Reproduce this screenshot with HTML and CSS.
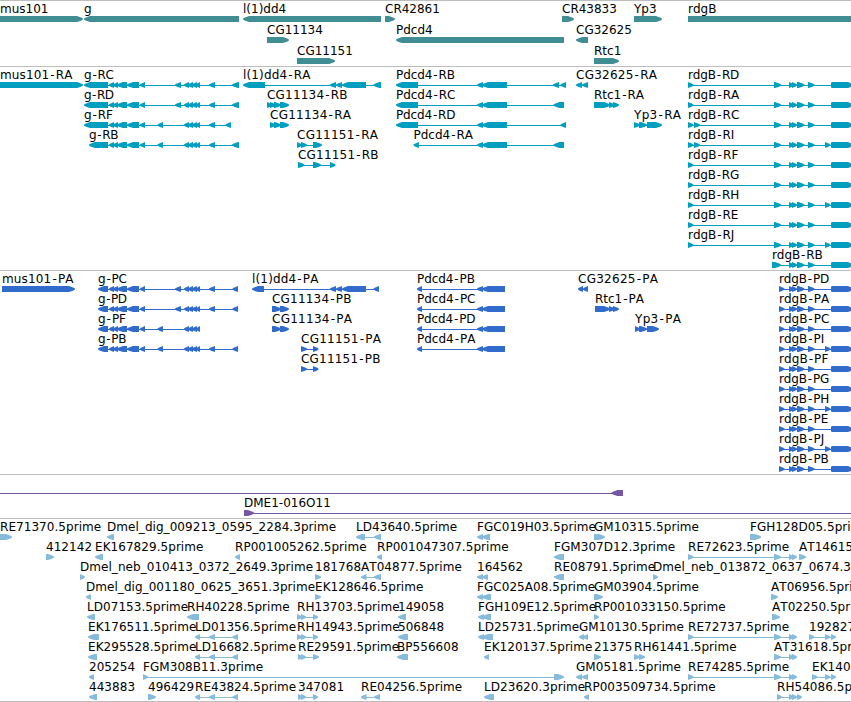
FILE: index.html
```html
<!DOCTYPE html>
<html lang="en">
<head>
<meta charset="utf-8">
<title>Genome tracks</title>
<link rel="stylesheet" href="styles.css">
</head>
<body>
<main class="browser">
<section class="track genes" data-track="genes"></section>
<section class="track transcripts" data-track="transcripts"></section>
<section class="track proteins" data-track="proteins"></section>
<section class="track bacs" data-track="bacs"></section>
<section class="track ests" data-track="ests"></section>
</main>
<script src="tracks.js"></script>
</body>
</html>
```
FILE: styles.css
```css
body {
  margin: 0;
  background: #fff;
  overflow: hidden;
}
.browser {
  display: flex;
  flex-direction: column;
  width: 851px;
  height: 702px;
  overflow: hidden;
}
.track {
  box-sizing: border-box;
  flex: none;
  border-top: 1px solid #bebebe;
  overflow: hidden;
}
.track svg {
  display: block;
  width: 851px;
  height: 100%;
}
.track text {
  font: 12px "DejaVu Sans", sans-serif;
  font-kerning: none;
  fill: #000;
  white-space: pre;
}
.genes { height: 66px; color: #408d93; }
.transcripts { height: 204px; color: #009ebf; }
.proteins { height: 204px; color: #316ccc; }
.bacs { height: 44px; color: #7657a6; }
.ests { height: 184px; color: #87bbdc; border-bottom: 1px solid #bebebe; }
.track.ests text { letter-spacing: 0.05px; }
.exon, .intron { fill: currentColor; }
.intron { shape-rendering: crispEdges; }
```
FILE: tracks.js
```js
// Feature format: "label|strand|exon exon ...|label x (optional)", exons as start-end.
const G = '117-127 127-139 140-145';
const G0 = '109-114 113-118 ' + G;
const G4 = '184-189 188-193 192-197 196-200';
const R = '789-794 792-797 797-804.5 808-814.5';
const END = '831-834 832-854';
const X = '825-830.5';

// Label widths by gene name for the hyphenated transcript and protein names.
const widths = { mus101: 72.5, g: 30, 'l(1)dd4': 67.5, Pdcd4: 59.5, rdgB: 51.3, Yp3: 47, Rtc1: 50, CG: 81 };
// Narrow final letters shorten the label.
const narrow = { I: 5, J: 5, F: 1, E: 1, B: 0.5 };

const tracks = {
  genes: { pitch: 21, rows: [
    ['mus101|>|-9-83|0', 'g|<|84-239', 'l(1)dd4|<|243-381', 'CR42861|>|385-395', 'CR43833|>|562-574', 'Yp3|>|634-662', 'rdgB|>|688-870'],
    ['CG11134|>|267-289', 'Pdcd4|<|396-564', 'CG32625|<|576-588'],
    ['CG11151|>|297-335', 'Rtc1|>|594-619']
  ]},
  transcripts: { pitch: 20, rows: [
    ['mus101-RA|>|-9-83|0', `g-RC|<|84-108 ${G0} 175-181 ${G4} 209-215 232-239`, 'l(1)dd4-RA|<|243-265 330-336 336-342 342-366 373.5-381', 'Pdcd4-RB|<|396-418 477-483 482-507 553-559 560.5-566', 'CG32625-RA|<|576-582 582-588', `rdgB-RD|>|688-693.5 774-781 ${R} ${END}`],
    [`g-RD|<|84-108 ${G0} 175-181 ${G4} 209-215 232-239`, 'CG11134-RB|>|267-272 270-276 274-281 280-289', 'Pdcd4-RC|<|396-418 477-483 482-507 553.5-564', 'Rtc1-RA|>|594-610 609-615 613-619', `rdgB-RA|>|688-693.5 774-781 ${R} ${END}`],
    [`g-RF|<|84-108 ${G0} 157.5-163 ${G4} 209-215 225.5-231`, 'CG11134-RA|>|270-276 274-281 280-289', 'Pdcd4-RD|<|396-418 477-483 482-507 560.5-566', 'Yp3-RA|>|634-640 639-647 647-662', `rdgB-RC|>|688-693.5 694-700 774-781 ${R} ${END}`],
    [`g-RB|<|89-108 ${G0} 157.5-163 ${G4} 209-215 232-239`, 'CG11151-RA|>|297-302 301-307 313-322', 'Pdcd4-RA|<|413.5-419 477-483 482-507 553.5-564', `rdgB-RI|>|688-693.5 694-700 774-781 ${R} ${X} ${END}`],
    ['CG11151-RB|>|298-304.5 313-321 330-335.5', `rdgB-RF|>|688-693.5 774-781 ${R} ${END}`],
    [`rdgB-RG|>|688-693.5 774-781 ${R} ${END}`],
    [`rdgB-RH|>|688-693.5 774-781 ${R} ${X} ${END}`],
    [`rdgB-RE|>|688-693.5 774-781 ${R} ${END}`],
    [`rdgB-RJ|>|688-693.5 774-781 ${R} ${X} ${END}`],
    [`rdgB-RB|>|772-781 ${R} ${END}`]
  ]},
  proteins: { pitch: 20, rows: [
    ['mus101-PA|>|2-75', `g-PC|<|98-108 ${G0} 175-181 ${G4} 209-215 232.5-238`, 'l(1)dd4-PA|<|252-264 330-336 336-342 342-366 373.5-379', 'Pdcd4-PB|<|417-422 477-483 482-505', 'CG32625-PA|<|578-583 583-588', `rdgB-PD|>|779-784.5 ${R} ${END}`],
    [`g-PD|<|98-108 ${G0} 175-181 ${G4} 209-215 232.5-238`, 'CG11134-PB|>|272-281 280-289', 'Pdcd4-PC|<|417-422 477-483 482-505', 'Rtc1-PA|>|595-610 609-615 613-619', `rdgB-PA|>|779-784.5 ${R} ${END}`],
    [`g-PF|<|98-108 ${G0} 157.5-163 ${G4}`, 'CG11134-PA|>|272-281 280-289', 'Pdcd4-PD|<|417-422 477-483 482-505', 'Yp3-PA|>|635-640 639-647 647-659', `rdgB-PC|>|779-784.5 ${R} ${END}`],
    [`g-PB|<|98-108 ${G0} 157.5-163 ${G4} 209-215 232.5-238`, 'CG11151-PA|>|301-307 313-318.5', 'Pdcd4-PA|<|417-422 477-483 482-505', `rdgB-PI|>|779-784.5 ${R} ${X} ${END}`],
    ['CG11151-PB|>|301-307 313-318.5', `rdgB-PF|>|779-784.5 ${R} ${END}`],
    [`rdgB-PG|>|779-784.5 ${R} ${END}`],
    [`rdgB-PH|>|779-784.5 ${R} ${X} ${END}`],
    [`rdgB-PE|>|779-784.5 ${R} ${END}`],
    [`rdgB-PJ|>|779-784.5 ${R} ${X} ${END}`],
    [`rdgB-PB|>|779-784.5 ${R} ${END}`]
  ]},
  bacs: { pitch: 20, rows: [
    ['|<|-20--10 611.5-623'],
    ['DME1-016O11|>|244-254 870-880']
  ]},
  ests: { pitch: 20, rows: [
    ['RE71370.5prime|>|-9-12|0', 'Dmel_dig_009213_0595_2284.3prime|<|107-114', 'LD43640.5prime|<|356-365 374-381', 'FGC019H03.5prime|<|477-483 482-490', 'GM10315.5prime|>|594-605', 'FGH128D05.5prime|>|750-761'],
    ['412142|>|46-54', 'EK167829.5prime|<|95-103', 'RP001005262.5prime|<|235-240', 'RP001047307.5prime|<|377-382', 'FGM307D12.3prime|<|554-564', 'RE72623.5prime|>|688-693.5 774-781 789-794 792-797', 'AT14615.5prime|>|799-806'],
    ['Dmel_neb_010413_0372_2649.3prime|>|80-85', '181768|>|315-321', 'AT04877.5prime|<|361-366.5 374-381', '164562|<|477-483 482-488', 'RE08791.5prime|<|554-564', 'Dmel_neb_013872_0637_0674.3prime|>|653-658'],
    ['Dmel_dig_001180_0625_3651.3prime|<|86-91', 'EK128646.5prime|>|315-321', 'FGC025A08.5prime|<|477-483 482-491', 'GM03904.5prime|>|594-603', 'AT06956.5prime|>|771-778'],
    ['LD07153.5prime|<|87-95', 'RH40228.5prime|<|187-199', 'RH13703.5prime|>|297-302 301-306 313-318', '149058|<|398-406', 'FGH109E12.5prime|<|478-484 482-491', 'RP001033150.5prime|>|594-599', 'AT02250.5prime|>|772-780'],
    ['EK176511.5prime|<|88-99', 'LD01356.5prime|<|195-200 209-215 232.5-238', 'RH14943.5prime|>|297-302 301-306 313-318', '506848|<|398-408', 'LD25731.5prime|<|478-484 482-493', 'GM10130.5prime|<|579-584 583-588', 'RE72737.5prime|>|688-693.5 774-781 789-794 792-797', '192827|>|809-814.5 825-830.5 831-836'],
    ['EK295528.5prime|<|88-97', 'LD16682.5prime|<|195-200 209-215 232.5-238', 'RE29591.5prime|>|298-303 301-306 313-319', 'BP556608|<|397-408', 'EK120137.5prime|<|484-489', '21375|>|594-601', 'RH61441.5prime|>|634-640 639-645', 'AT31618.5prime|>|774-781 789-794 792-797'],
    ['205254|<|89-94', 'FGM308B11.3prime|>|143-148 554-564', 'GM05181.5prime|<|576-582 582-588', 'RE74285.5prime|>|688-693.5 774-781 789-794 792-797', 'EK140123.5prime|>|812-817.5 825-830.5 831-836'],
    ['443883|<|89-97', '496429|>|148-156', 'RE43824.5prime|<|195-200 209-215 232.5-238', '347081|>|298-303 301-306 313-318', 'RE04256.5prime|<|361-366.5 374-380', 'LD23620.3prime|<|484-494', 'RP003509734.5prime|<|584-589', 'RH54086.5prime|>|777-782 789-794 792-797 797-802']
  ]}
};

const NS = 'http://www.w3.org/2000/svg';
function add(parent, name, attrs) {
  const el = document.createElementNS(NS, name);
  for (const k in attrs) el.setAttribute(k, attrs[k]);
  parent.appendChild(el);
  return el;
}

for (const section of document.querySelectorAll('.track')) {
  const track = tracks[section.dataset.track];
  const svg = add(section, 'svg', {});
  track.rows.forEach((row, i) => {
    const top = 15 + i * track.pitch;
    for (const item of row) {
      const [label, strand, spans, at] = item.split('|');
      const exons = spans.split(' ').map(s => s.match(/^(-?[\d.]+)-(-?[\d.]+)$/).slice(1).map(Number));
      const start = exons[0][0];
      const end = exons[exons.length - 1][1];
      if (exons.length > 1) {
        add(svg, 'rect', { class: 'intron', x: start + 2, y: top + 3, width: end - start - 4, height: 1 });
      }
      for (const [a, b] of exons) {
        const head = Math.min(6, b - a);
        const near = head / 3;
        const pts = strand === '>'
          ? [[a, 0], [b - head, 0], [b - near, 1.5], [b, 2.6], [b, 3.6], [b - near, 4.7], [b - head, 6], [a, 6]]
          : [[b, 0], [a + head, 0], [a + near, 1.5], [a, 2.6], [a, 3.6], [a + near, 4.7], [a + head, 6], [b, 6]];
        add(svg, 'polygon', { class: 'exon', points: pts.map(([x, y]) => x + ',' + (top + y)).join(' ') });
      }
      if (label) {
        const text = add(svg, 'text', { x: at || start, y: top - 3 });
        const dash = label.indexOf('-');
        if (dash > 0) {
          const name = label.slice(0, dash);
          const width = widths[name] || (name.startsWith('CG') ? widths.CG : 0);
          if (width) {
            const dx = Array(label.length).fill(0);
            dx[dash] = 1;
            dx[dash + 1] = 1;
            text.setAttribute('dx', dx.join(' '));
            const trim = (label[dash + 1] === 'P' ? 1 : 0) + (narrow[label[dash + 2]] || 0);
            text.setAttribute('textLength', width - trim);
          }
        }
        text.textContent = label;
      }
    }
  });
}
```
